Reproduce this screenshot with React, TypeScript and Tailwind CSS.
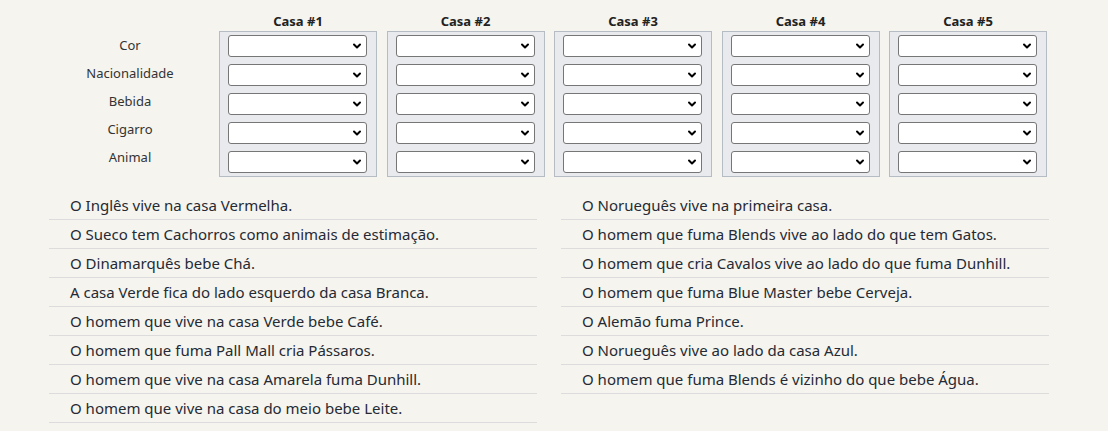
import React from 'react';
import { ChevronDown } from 'lucide-react';

const atributos = ['Cor', 'Nacionalidade', 'Bebida', 'Cigarro', 'Animal'];
const casas = [1, 2, 3, 4, 5];

const dicasEsquerda = [
  'O Inglês vive na casa Vermelha.',
  'O Sueco tem Cachorros como animais de estimação.',
  'O Dinamarquês bebe Chá.',
  'A casa Verde fica do lado esquerdo da casa Branca.',
  'O homem que vive na casa Verde bebe Café.',
  'O homem que fuma Pall Mall cria Pássaros.',
  'O homem que vive na casa Amarela fuma Dunhill.',
  'O homem que vive na casa do meio bebe Leite.',
];

const dicasDireita = [
  'O Norueguês vive na primeira casa.',
  'O homem que fuma Blends vive ao lado do que tem Gatos.',
  'O homem que cria Cavalos vive ao lado do que fuma Dunhill.',
  'O homem que fuma Blue Master bebe Cerveja.',
  'O Alemão fuma Prince.',
  'O Norueguês vive ao lado da casa Azul.',
  'O homem que fuma Blends é vizinho do que bebe Água.',
];

const Seletor = () => (
  <div className="relative h-[22px] w-full">
    <select className="h-full w-full appearance-none rounded-[3px] border border-[#767676] bg-white" />
    <ChevronDown
      className="pointer-events-none absolute right-[4px] top-[5px] h-[12px] w-[12px] text-black"
      strokeWidth={4}
    />
  </div>
);

const Dica = ({ texto }: { texto: string }) => (
  <div className="flex h-[29px] items-center border-b border-[#dcdcdc] pl-[21px] text-[15px] text-[#252a34]">
    {texto}
  </div>
);

export default function App() {
  return (
    <div className="h-[431px] w-full overflow-hidden bg-[#f5f4ee] pl-[49px] font-['Segoe_UI','Noto_Sans',sans-serif]">
      <div className="flex pt-[12px]">
        <div className="mr-[8px] w-[162px] pt-[23px] flex flex-col gap-[6px]">
          {atributos.map(a => (
            <div key={a} className="flex h-[22px] items-center justify-center text-[13px] text-[#333]">
              {a}
            </div>
          ))}
        </div>
        <div className="flex gap-[9.5px]">
          {casas.map(n => (
            <div key={n} className="flex w-[158px] flex-col">
              <div className="mb-[1px] h-[18px] text-center text-[13px] font-bold leading-[18px] text-[#222]">
                Casa #{n}
              </div>
              <div className="flex flex-col gap-[7px] border border-[#b5bcc4] bg-[#e8eaed] py-[3px] pl-[8px] pr-[9px]">
                {atributos.map(a => (
                  <Seletor key={a} />
                ))}
              </div>
            </div>
          ))}
        </div>
      </div>

      <div className="mt-[14px] flex gap-[24px]">
        <div className="w-[488px]">
          {dicasEsquerda.map(d => (
            <Dica key={d} texto={d} />
          ))}
        </div>
        <div className="w-[488px]">
          {dicasDireita.map(d => (
            <Dica key={d} texto={d} />
          ))}
        </div>
      </div>
    </div>
  );
}
